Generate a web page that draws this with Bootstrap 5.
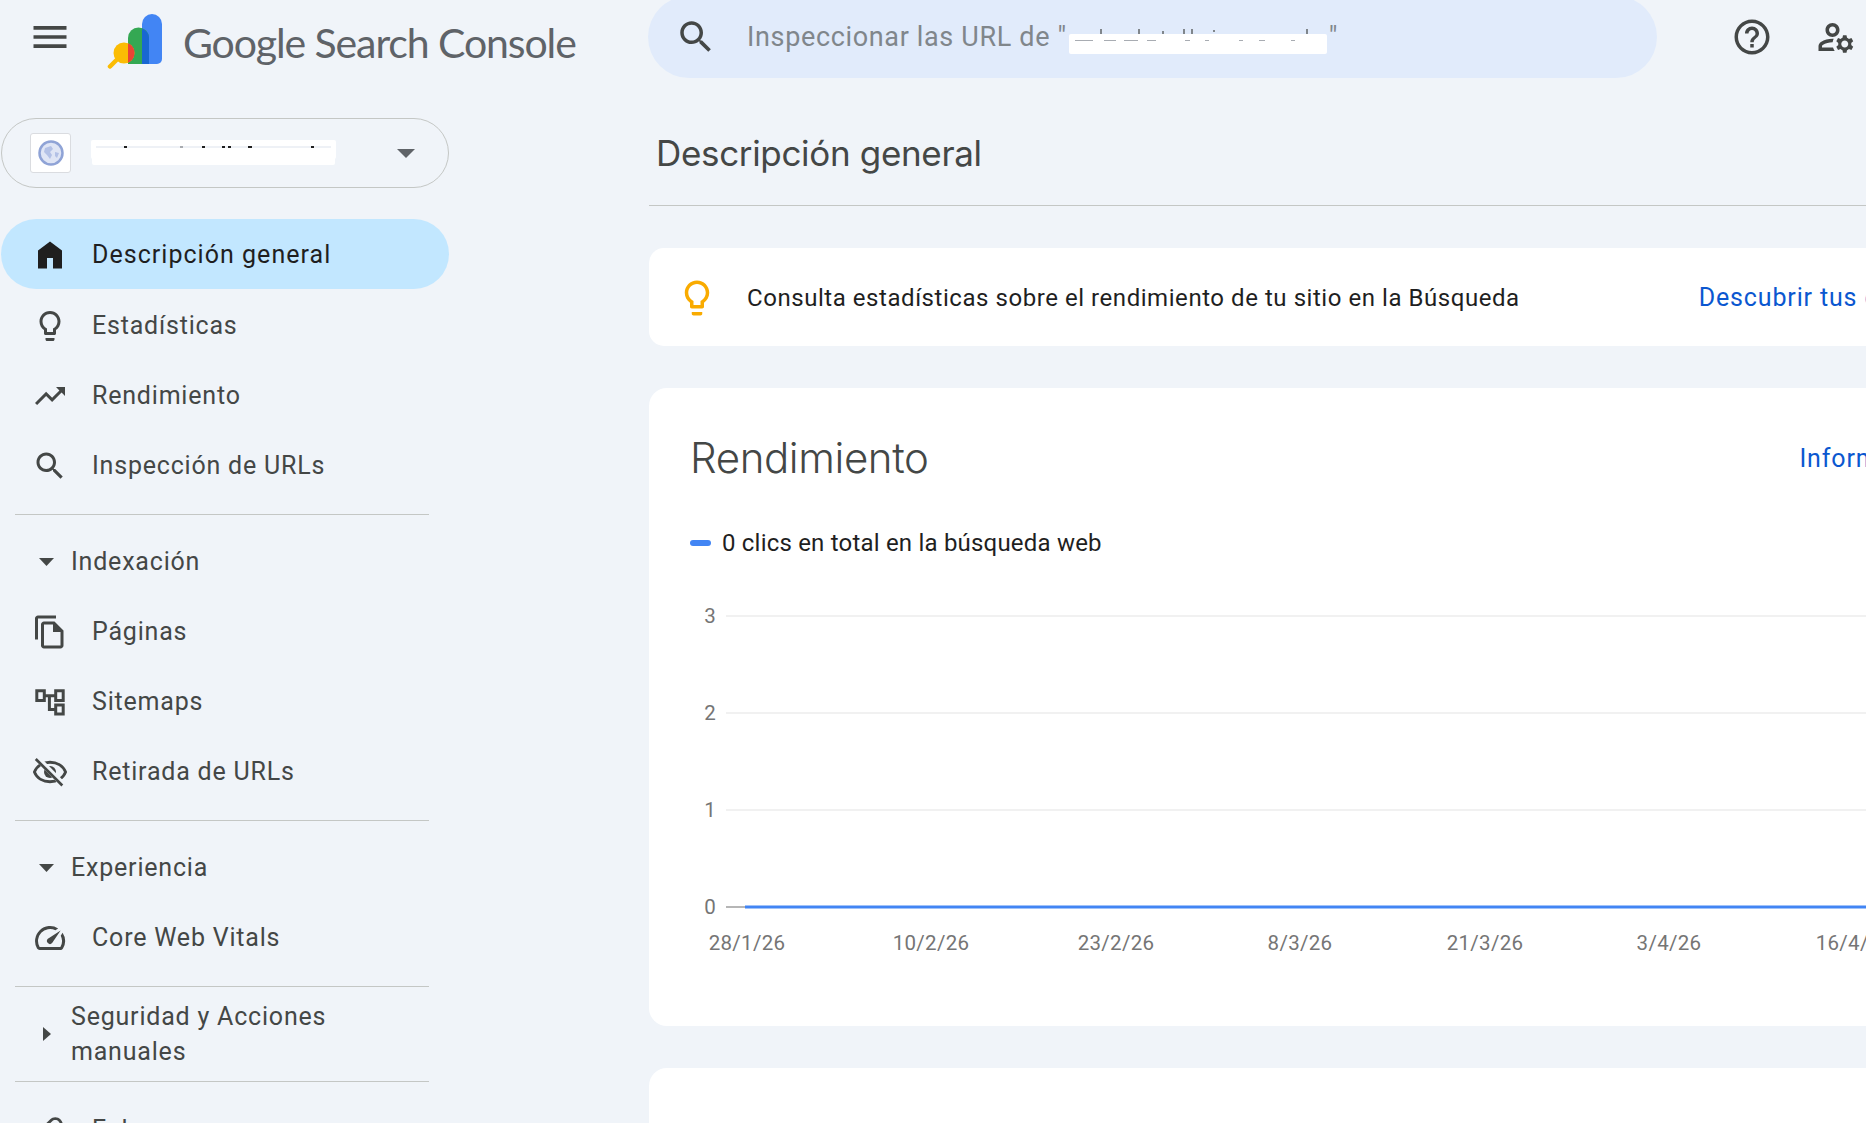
<!DOCTYPE html>
<html lang="es">
<head>
  <meta charset="UTF-8" />
  <meta name="viewport" content="width=device-width, initial-scale=1.0" />
  <title>Google Search Console</title>
  <link href="https://cdn.jsdelivr.net/npm/bootstrap@5.3.0/dist/css/bootstrap.min.css" rel="stylesheet" />
  <style>
    body { background: #f0f4f9; font-family: Roboto, "Liberation Sans", sans-serif; height: 1123px; width: 1866px; }
    .ico { fill: #444746; flex-shrink: 0; display: block; }

    /* barra superior */
    .topbar { height: 82px; margin-top: -4px; }
    .burger { margin-left: 28px; width: 44px; }
    .logo-mark { margin-left: 35px; margin-top: 8px; }
    .brand { font-family: Lato, sans-serif; font-size: 41px; color: #5f6368; margin-left: 2px; margin-top: 11px; letter-spacing: -1.1px; width: 465px; }
    .searchbox { width: 1009px; height: 82px; background: #e1ebfb; padding-left: 27px; }
    .searchbox > span { font-size: 27px; color: #80868b; margin-left: 30px; letter-spacing: .65px; white-space: nowrap; }
    .hidden-url { vertical-align: -8px; margin: 0 2px 0 2px; }
    .help-btn { margin-left: 74px; }
    .admin-btn { margin-left: 42px; }

    /* lateral */
    .sidebar { width: 649px; padding-left: 1px; padding-right: 200px; padding-top: 40px; }
    .site-pick { height: 70px; border: 1px solid #c4c7c5; padding-left: 28px; padding-right: 33px; }
    .favicon { width: 41px; height: 40px; background: #fff; border: 1px solid #dadce0; border-radius: 3px; }
    .site-name { margin-left: 20px; margin-top: -2px; }
    .side-link { height: 70px; padding: 1px 0 0 31px; font-size: 25px; letter-spacing: .8px; color: #444746; gap: 24px; }
    .side-link:hover { color: #444746; }
    .side-link.active { background: #c2e7ff; color: #1f1f1f; margin-top: -1px; margin-bottom: 1px; letter-spacing: 1.03px; }
    .side-link.active .ico { fill: #1f1f1f; }
    .side-group { height: 70px; padding: 1px 0 0 38px; font-size: 25px; letter-spacing: .8px; color: #444746; gap: 17px; }
    .side-group.tall { height: auto; line-height: 35px; padding-top: 12px; padding-bottom: 12px; }
    .caret-box { width: 15px; flex-shrink: 0; }
    .side-rule { margin: 14px 20px 11px 14px; border-top: 1px solid #c4c7c5; opacity: 1; }
    .side-rule.near { margin-bottom: 0; }
    .side-last { margin-top: 12px; }

    /* contenido */
    .content { width: 1500px; flex-shrink: 0; }
    .page-title { font-family: Inter, sans-serif; font-size: 35px; font-weight: 400; color: #444746; margin: 0; height: 104px; padding: 0 0 2px 7px; border-bottom: 1px solid #c4c7c5; letter-spacing: -.33px; }
    .tip { height: 98px; margin-top: 42px; border-radius: 15px; background: #fff; font-size: 24px; color: #1f1f1f; padding: 1px 0 0 27px; letter-spacing: .55px; }
    .tip-icon { margin-right: 29px; }
    .tip-link { color: #0b57d0; text-decoration: none; font-size: 25px; margin-left: 179px; letter-spacing: .85px; }
    .panel { border-radius: 18px; background: #fff; margin-top: 42px; }
    .panel-top { padding: 10px 41px 0 41px; height: 130px; }
    .panel-title { font-family: Inter, sans-serif; font-weight: 300; font-size: 42px; color: #444746; margin: 0; letter-spacing: -.4px; }
    .panel-link { color: #0b57d0; text-decoration: none; font-size: 25px; margin-left: 871px; letter-spacing: .85px; white-space: nowrap; padding-top: 2px; }
    .legend-row { padding-left: 41px; font-size: 24px; letter-spacing: .2px; color: #1f1f1f; gap: 11px; height: 24px; margin-top: 13px; }
    .legend-dash { width: 21px; height: 6px; background: #4285f4; border-radius: 3px; }
    .chart { display: block; }
    .chart text { font-family: Roboto, sans-serif; font-size: 20.5px; fill: #757575; letter-spacing: .3px; }
    .panel-tall { height: 638px; }
    .panel-next { height: 200px; padding: 48px 41px 0; }
  </style>
</head>
<body class="overflow-hidden">

  <header class="topbar d-flex align-items-center">
    <div class="burger">
      <svg class="ico" width="44" height="44" viewBox="0 0 24 24"><path d="M3 18h18v-2H3v2zm0-5h18v-2H3v2zm0-7v2h18V6H3z"/></svg>
    </div>
    <svg class="logo-mark flex-shrink-0" width="74" height="60" viewBox="0 0 74 60">
      <path d="M35 53V13a10 10 0 0 1 20 0v35a5 5 0 0 1-5 5z" fill="#4285f4"/>
      <path d="M21 53V27a10.500 10.500 0 0 1 21 0v26z" fill="#34a853"/>
      <path d="M35 17.500a10.500 10.500 0 0 1 7 9.500v26h-7z" fill="#1967d2"/>
      <circle cx="17" cy="42" r="10.500" fill="#fbbc04"/>
      <path d="M21 32.300a10.500 10.500 0 0 1 0 19.400z" fill="#ea4335"/>
      <path d="M9 49.500L3 55.500" stroke="#fbbc04" stroke-width="4.500" stroke-linecap="round"/>
    </svg>
    <div class="brand flex-shrink-0">Google Search Console</div>
    <div class="searchbox rounded-pill d-flex align-items-center flex-shrink-0">
      <svg class="ico" width="42" height="42" viewBox="0 0 24 24"><path d="M15.5 14h-.79l-.28-.27C15.41 12.59 16 11.11 16 9.5 16 5.91 13.09 3 9.5 3S3 5.91 3 9.5 5.91 16 9.5 16c1.61 0 3.09-.59 4.23-1.57l.27.28v.79l5 4.99L20.49 19l-4.99-5zm-6 0C7.01 14 5 11.99 5 9.5S7.01 5 9.5 5 14 7.01 14 9.5 11.99 14 9.5 14z"/></svg>
      <span>Inspeccionar las URL de "<svg class="hidden-url" width="258" height="30" viewBox="0 0 258 30"><g fill="#80868b"><rect x="31" y="5" width="2" height="5"/><rect x="69" y="5" width="2" height="5"/><rect x="93" y="7" width="2" height="3"/><rect x="114" y="5" width="2" height="5"/><rect x="122" y="5" width="2" height="5"/><rect x="144" y="6" width="2" height="2"/><rect x="237" y="5" width="2" height="5"/></g><rect y="10" width="258" height="20" rx="2" fill="#fff"/><g fill="#a8acb2"><rect x="6" y="16" width="18" height="1"/><rect x="35" y="16" width="12" height="1"/><rect x="55" y="16" width="14" height="1"/><rect x="78" y="16" width="9" height="1"/><rect x="116" y="16" width="5" height="1"/><rect x="136" y="16" width="4" height="1"/><rect x="170" y="16" width="4" height="1"/><rect x="190" y="16" width="6" height="1"/><rect x="222" y="16" width="4" height="1"/></g></svg>"</span>
    </div>
    <svg class="ico help-btn" width="42" height="42" viewBox="0 0 24 24"><path d="M11 18h2v-2h-2v2zm1-16C6.48 2 2 6.48 2 12s4.48 10 10 10 10-4.48 10-10S17.52 2 12 2zm0 18c-4.41 0-8-3.59-8-8s3.59-8 8-8 8 3.59 8 8-3.59 8-8 8zm0-14c-2.21 0-4 1.79-4 4h2c0-1.1.9-2 2-2s2 .9 2 2c0 2-3 1.75-3 5h2c0-2.25 3-2.5 3-5 0-2.21-1.79-4-4-4z"/></svg>
    <svg class="ico admin-btn" width="42" height="42" viewBox="0 0 24 24"><path d="M4 18v-.65c0-.34.16-.66.41-.81C6.1 15.53 8.03 15 10 15c.03 0 .05 0 .08.01.1-.7.3-1.37.59-1.98-.22-.02-.44-.03-.67-.03-2.42 0-4.68.67-6.61 1.82-.88.52-1.39 1.5-1.39 2.53V20h9.26c-.42-.6-.75-1.28-.97-2H4zM10 12c2.21 0 4-1.79 4-4s-1.79-4-4-4-4 1.79-4 4 1.79 4 4 4zm0-6c1.1 0 2 .9 2 2s-.9 2-2 2-2-.9-2-2 .9-2 2-2zM20.75 16c0-.22-.03-.42-.06-.63l1.14-1.01-1-1.73-1.45.49c-.32-.27-.68-.48-1.08-.63L18 11h-2l-.3 1.49c-.4.15-.76.36-1.08.63l-1.45-.49-1 1.73 1.14 1.01c-.03.21-.06.41-.06.63s.03.42.06.63l-1.14 1.01 1 1.73 1.45-.49c.32.27.68.48 1.08.63L16 21h2l.3-1.49c.4-.15.76-.36 1.08-.63l1.45.49 1-1.73-1.14-1.01c.03-.21.06-.41.06-.63zM17 18c-1.1 0-2-.9-2-2s.9-2 2-2 2 .9 2 2-.9 2-2 2z"/></svg>
  </header>

  <div class="d-flex">
    <aside class="sidebar flex-shrink-0">
      <div class="site-pick rounded-pill d-flex align-items-center">
        <div class="favicon d-flex align-items-center justify-content-center flex-shrink-0">
          <svg width="28" height="28" viewBox="0 0 28 28"><circle cx="14" cy="14" r="11.500" fill="#dfe5f5" stroke="#8fa3d6" stroke-width="2.500"/><path d="M8 9l6-2 2 3-3 3 2 3-2 4-3-4-3-3zM18 13l4 1-2 5-2-2z" fill="#b3c1e6"/></svg>
        </div>
        <svg class="site-name flex-shrink-0" width="245" height="25" viewBox="0 0 245 25">
          <rect width="245" height="19" rx="2" fill="#fff"/>
          <rect x="1" y="6" width="243" height="19" rx="2" fill="#fff"/>
          <rect x="5" y="6" width="235" height="2" fill="#eef1f6"/>
          <g fill="#1f1f1f"><rect x="33" y="6" width="3" height="2"/><rect x="111" y="6" width="3" height="2"/><rect x="131" y="6" width="3" height="2"/><rect x="137" y="6" width="3" height="2"/><rect x="157" y="6" width="4" height="2"/><rect x="220" y="6" width="3" height="2"/></g>
          <rect x="89" y="6" width="3" height="2" fill="#a8abb0"/>
        </svg>
        <svg class="ms-auto" width="18" height="9" viewBox="0 0 18 9"><path d="M0 0h18L9 9z" fill="#5f6368"/></svg>
      </div>

      <nav class="nav flex-column mt-4 pt-2">
        <a class="nav-link side-link active rounded-pill d-flex align-items-center" href="#">
          <svg class="ico" width="36" height="36" viewBox="0 0 24 24"><path d="M4 21V9l8-6 8 6v12h-6v-7h-4v7z"/></svg>Descripción general
        </a>
        <a class="nav-link side-link d-flex align-items-center" href="#">
          <svg class="ico" width="36" height="36" viewBox="0 0 24 24"><path d="M9 21c0 .55.45 1 1 1h4c.55 0 1-.45 1-1v-1H9v1zm3-19C8.14 2 5 5.14 5 9c0 2.38 1.19 4.47 3 5.74V17c0 .55.45 1 1 1h6c.55 0 1-.45 1-1v-2.26c1.81-1.27 3-3.36 3-5.74 0-3.86-3.14-7-7-7zm2.85 11.1l-.85.6V16h-4v-2.3l-.85-.6C7.8 12.16 7 10.63 7 9c0-2.76 2.24-5 5-5s5 2.24 5 5c0 1.63-.8 3.16-2.15 4.1z"/></svg>Estadísticas
        </a>
        <a class="nav-link side-link d-flex align-items-center" href="#">
          <svg class="ico" width="36" height="36" viewBox="0 0 24 24"><path d="M16 6l2.29 2.29-4.88 4.88-4-4L2 16.59 3.41 18l6-6 4 4 6.3-6.29L22 12V6z"/></svg>Rendimiento
        </a>
        <a class="nav-link side-link d-flex align-items-center" href="#">
          <svg class="ico" width="36" height="36" viewBox="0 0 24 24"><path d="M15.5 14h-.79l-.28-.27C15.41 12.59 16 11.11 16 9.5 16 5.91 13.09 3 9.5 3S3 5.91 3 9.5 5.91 16 9.5 16c1.61 0 3.09-.59 4.23-1.57l.27.28v.79l5 4.99L20.49 19l-4.99-5zm-6 0C7.01 14 5 11.99 5 9.5S7.01 5 9.5 5 14 7.01 14 9.5 11.99 14 9.5 14z"/></svg>Inspección de URLs
        </a>
        <hr class="side-rule">
        <div class="side-group d-flex align-items-center">
          <svg class="caret-box" width="15" height="8" viewBox="0 0 15 8"><path d="M0 0h15L7.5 8z" fill="#444746"/></svg>Indexación
        </div>
        <a class="nav-link side-link d-flex align-items-center" href="#">
          <svg class="ico" width="36" height="36" viewBox="0 0 24 24"><path d="M16 1H4c-1.1 0-2 .9-2 2v14h2V3h12V1zm-1 4H8c-1.1 0-1.99.9-1.99 2L6 21c0 1.1.89 2 1.99 2H19c1.1 0 2-.9 2-2V11l-6-6zM8 21V7h6v5h5v9H8z"/></svg>Páginas
        </a>
        <a class="nav-link side-link d-flex align-items-center" href="#">
          <svg class="ico" width="36" height="36" viewBox="0 0 24 24"><path d="M3.200 4.500h5v6.500h-5zM15.800 4.500h5v6.500h-5zM15.800 14h5v6h-5zM8.200 7.800h7.600M11.600 7.800V17h4.200" fill="none" stroke="#444746" stroke-width="2"/></svg>Sitemaps
        </a>
        <a class="nav-link side-link d-flex align-items-center" href="#">
          <svg class="ico" width="36" height="36" viewBox="0 0 24 24"><path d="M1.600 12C5 3.300 19 3.300 22.400 12 19 20.700 5 20.700 1.600 12z" fill="none" stroke="#444746" stroke-width="1.900"/><circle cx="12" cy="12" r="4" fill="#444746"/><path d="M3.200 2.400L20.400 20" stroke="#f0f4f9" stroke-width="3.800"/><path d="M2.500 3.300L20.200 21" stroke="#444746" stroke-width="1.800"/></svg>Retirada de URLs
        </a>
        <hr class="side-rule">
        <div class="side-group d-flex align-items-center">
          <svg class="caret-box" width="15" height="8" viewBox="0 0 15 8"><path d="M0 0h15L7.5 8z" fill="#444746"/></svg>Experiencia
        </div>
        <a class="nav-link side-link d-flex align-items-center" href="#">
          <svg class="ico" width="36" height="36" viewBox="0 0 24 24"><path d="M20.38 8.57l-1.23 1.85a8 8 0 0 1-.22 7.58H5.07A8 8 0 0 1 15.58 6.85l1.85-1.23A10 10 0 0 0 3.35 19a2 2 0 0 0 1.72 1h13.85a2 2 0 0 0 1.74-1 10 10 0 0 0-.27-10.44zm-9.790 6.840a2 2 0 0 0 2.830 0l5.660-8.490-8.490 5.660a2 2 0 0 0 0 2.830z"/></svg>Core Web Vitals
        </a>
        <hr class="side-rule near">
        <div class="side-group tall d-flex align-items-center">
          <svg class="caret-box" width="15" height="14" viewBox="0 0 15 14"><path d="M4 0l8 7-8 7z" fill="#444746"/></svg><span>Seguridad y Acciones<br>manuales</span>
        </div>
        <hr class="side-rule near mt-0">
        <a class="nav-link side-link side-last d-flex align-items-center" href="#">
          <svg class="ico" width="36" height="36" viewBox="0 0 24 24"><path transform="rotate(-45 12 12)" d="M3.900 12c0-1.710 1.390-3.100 3.100-3.100h4V7H7c-2.760 0-5 2.240-5 5s2.240 5 5 5h4v-1.900H7c-1.710 0-3.100-1.390-3.100-3.100zM8 13h8v-2H8v2zm9-6h-4v1.900h4c1.710 0 3.100 1.390 3.100 3.100s-1.390 3.100-3.100 3.100h-4V17h4c2.760 0 5-2.240 5-5s-2.240-5-5-5z"/></svg>Enlaces
        </a>
      </nav>
    </aside>

    <main class="content">
      <h1 class="page-title d-flex align-items-center mt-4">Descripción general</h1>

      <div class="tip d-flex align-items-center">
        <svg class="tip-icon flex-shrink-0" width="42" height="42" viewBox="0 0 24 24" fill="#f9ab00"><path d="M9 21c0 .55.45 1 1 1h4c.55 0 1-.45 1-1v-1H9v1zm3-19C8.14 2 5 5.14 5 9c0 2.38 1.19 4.47 3 5.74V17c0 .55.45 1 1 1h6c.55 0 1-.45 1-1v-2.26c1.81-1.27 3-3.36 3-5.74 0-3.86-3.14-7-7-7zm2.85 11.1l-.85.6V16h-4v-2.3l-.85-.6C7.8 12.160 7 10.630 7 9c0-2.760 2.240-5 5-5s5 2.240 5 5c0 1.630-.8 3.160-2.150 4.100z"/></svg>
        <span>Consulta estadísticas sobre el rendimiento de tu sitio en la Búsqueda</span>
        <a class="tip-link text-nowrap" href="#">Descubrir tus estadísticas</a>
      </div>

      <section class="panel panel-tall">
        <div class="panel-top d-flex align-items-center">
          <h2 class="panel-title">Rendimiento</h2>
          <a class="panel-link" href="#">Informe completo</a>
        </div>
        <div class="legend-row d-flex align-items-center">
          <span class="legend-dash"></span><span>0 clics en total en la búsqueda web</span>
        </div>
        <svg class="chart" width="1500" height="420" viewBox="0 0 1500 420">
          <g stroke="#ededed" stroke-width="1.500">
            <line x1="77" y1="61" x2="1500" y2="61"/>
            <line x1="77" y1="158" x2="1500" y2="158"/>
            <line x1="77" y1="255" x2="1500" y2="255"/>
          </g>
          <line x1="77" y1="352" x2="96" y2="352" stroke="#9e9e9e" stroke-width="1.500"/>
          <line x1="96" y1="352" x2="1500" y2="352" stroke="#4285f4" stroke-width="3"/>
          <g text-anchor="end">
            <text x="67" y="68">3</text>
            <text x="67" y="165">2</text>
            <text x="67" y="262">1</text>
            <text x="67" y="359">0</text>
          </g>
          <g text-anchor="middle">
            <text x="98" y="395">28/1/26</text>
            <text x="282" y="395">10/2/26</text>
            <text x="467" y="395">23/2/26</text>
            <text x="651" y="395">8/3/26</text>
            <text x="836" y="395">21/3/26</text>
            <text x="1020" y="395">3/4/26</text>
            <text x="1205" y="395">16/4/26</text>
          </g>
        </svg>
      </section>

      <section class="panel panel-next">
        <h2 class="panel-title">Indexación</h2>
      </section>
    </main>
  </div>

</body>
</html>
